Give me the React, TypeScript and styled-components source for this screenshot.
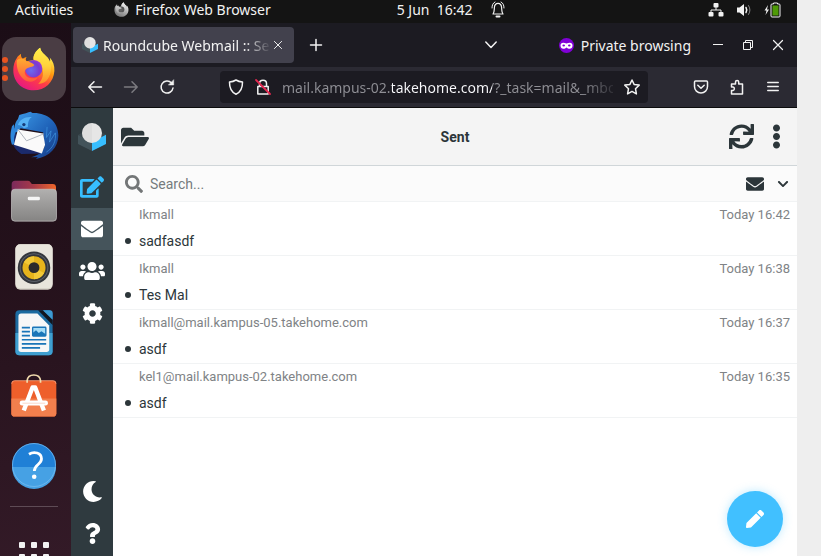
import React from "react";
import styled, { createGlobalStyle } from "styled-components";
import {
  FaChevronDown,
  FaCog,
  FaEdit,
  FaEllipsisV,
  FaEnvelope,
  FaFolderOpen,
  FaMoon,
  FaPen,
  FaQuestion,
  FaSearch,
  FaSync,
  FaUsers,
} from "react-icons/fa";

const uiFont = `"Noto Sans", "Open Sans", sans-serif`;
const mailFont = `Roboto, sans-serif`;

const GlobalStyle = createGlobalStyle`
  *, *::before, *::after { box-sizing: border-box; }
  body { margin: 0; background: #eeeeee; overflow: hidden; }
  button, input { font: inherit; color: inherit; border: 0; padding: 0; margin: 0; background: none; }
  button { cursor: pointer; }
  svg { display: block; flex: none; overflow: visible; }
`;

/* ---------- desktop ---------- */

const Desktop = styled.div`
  display: flex;
  flex-direction: column;
  height: 100vh;
  margin-right: 24px;
  overflow: hidden;
  background: #141414;
  font-family: ${uiFont};
  font-size: 14px;
  color: #f2f2f2;
`;

const TopBar = styled.header`
  display: grid;
  grid-template-columns: 58fr auto 42fr;
  align-items: center;
  flex: none;
  height: 23px;
  padding: 0 16px 4px 15px;
`;

const TopGroup = styled.div<{ $end?: boolean }>`
  display: flex;
  align-items: center;
  gap: ${(p) => (p.$end ? 12 : 41)}px;
  justify-content: ${(p) => (p.$end ? "flex-end" : "flex-start")};
`;

const TopButton = styled.button<{ $gap?: number }>`
  display: flex;
  align-items: center;
  gap: ${(p) => p.$gap ?? 6}px;
  height: 19px;
  line-height: 19px;
  white-space: pre;
`;

const Workspace = styled.div`
  display: flex;
  flex: 1;
  min-height: 0;
`;

const Dock = styled.nav`
  display: flex;
  flex-direction: column;
  gap: 2px;
  flex: none;
  width: 71px;
  padding: 14px 5px 0 2px;
  overflow: hidden;
  background: linear-gradient(170deg, #1b0d16 0%, #24111b 45%, #331a27 100%);
`;

const DockTile = styled.button<{ $active?: boolean }>`
  position: relative;
  display: flex;
  align-items: center;
  justify-content: center;
  flex: none;
  width: 64px;
  height: 64px;
  border-radius: 14px;
  background: ${(p) => (p.$active ? "#4a3d44" : "transparent")};
`;

const RunningDots = styled.span`
  position: absolute;
  left: 0;
  top: 20px;
  display: grid;
  gap: 3px;
  i {
    width: 6px;
    height: 6px;
    border-radius: 3px;
    background: #e95420;
  }
`;

const DockDivider = styled.hr`
  flex: none;
  width: 48px;
  height: 1px;
  margin: 7px auto 16px;
  border: 0;
  background: #5e4b55;
`;

/* ---------- browser ---------- */

const Browser = styled.div`
  display: flex;
  flex-direction: column;
  flex: 1;
  min-width: 0;
`;

const TabStrip = styled.div`
  display: flex;
  align-items: center;
  flex: none;
  height: 44px;
  padding: 0 4px 0 2px;
  background: #1c1b22;
`;

const Tab = styled.div`
  display: flex;
  align-items: center;
  width: 221px;
  height: 36px;
  padding: 0 12px 0 9px;
  border-radius: 4px;
  background: #42414d;
`;

const TabTitle = styled.span`
  flex: 1;
  margin: 0 5px;
  overflow: hidden;
  white-space: nowrap;
  mask-image: linear-gradient(to right, #000 142px, transparent 168px);
`;

const Spacer = styled.div`
  flex: 1;
`;

const ChromeButton = styled.button<{ $w: number; $dim?: boolean }>`
  display: flex;
  align-items: center;
  justify-content: center;
  flex: none;
  width: ${(p) => p.$w}px;
  height: 36px;
  opacity: ${(p) => (p.$dim ? 0.4 : 1)};
`;

const PrivateBadge = styled.div`
  display: flex;
  align-items: center;
  gap: 7px;
  margin: 0 12px 0 53px;
`;

const NavBar = styled.div`
  display: flex;
  align-items: center;
  flex: none;
  height: 41px;
  padding: 0 6px;
  background: #2b2a33;
  border-bottom: 1px solid #0c0c0d;
`;

const UrlBox = styled.div`
  display: flex;
  align-items: center;
  gap: 11px;
  flex: 1;
  height: 32px;
  margin: 0 35px;
  padding: 0 8px;
  border-radius: 4px;
  background: #1c1b22;
`;

const UrlInput = styled.input`
  flex: 1;
  min-width: 0;
  height: 24px;
  outline: none;
  color: transparent;
  background-image: linear-gradient(
    to right,
    #8f8f95 110px,
    #fbfbfe 110px,
    #fbfbfe 210px,
    #8f8f95 210px,
    #8f8f95 300px,
    transparent 338px
  );
  background-clip: text;
  -webkit-background-clip: text;
`;

/* ---------- webmail ---------- */

const Webmail = styled.div`
  position: relative;
  display: flex;
  flex: 1;
  min-height: 0;
  background: #fff;
  color: #2c363a;
  font-family: ${mailFont};
`;

const TaskMenu = styled.nav`
  display: flex;
  flex-direction: column;
  align-items: stretch;
  flex: none;
  width: 42px;
  padding-bottom: 2px;
  background: #2f3a3f;
`;

const Logo = styled.div`
  display: flex;
  align-items: center;
  justify-content: center;
  height: 58px;
`;

const TaskLink = styled.a<{ $selected?: boolean; $accent?: boolean }>`
  display: flex;
  align-items: center;
  justify-content: center;
  height: 42px;
  color: ${(p) => (p.$accent ? "#37beff" : "#fff")};
  background: ${(p) => (p.$selected ? "#45545b" : "transparent")};
`;

const Content = styled.main`
  display: flex;
  flex-direction: column;
  flex: 1;
  min-width: 0;
`;

const Header = styled.header`
  display: grid;
  grid-template-columns: 1fr auto 1fr;
  align-items: center;
  flex: none;
  height: 58px;
  padding: 0 8px;
  background: #f4f4f4;
  border-bottom: 1px solid #d0d6d9;
`;

const Title = styled.h1`
  margin: 0;
  font-size: 14px;
  font-weight: 700;
`;

const HeaderTools = styled.div<{ $end?: boolean }>`
  display: flex;
  align-items: center;
  gap: 10px;
  justify-content: ${(p) => (p.$end ? "flex-end" : "flex-start")};
`;

const SearchBar = styled.form`
  display: flex;
  align-items: center;
  flex: none;
  height: 36px;
  padding: 0 8px 0 12px;
  background: #fbfbfb;
  border-bottom: 1px solid #f1f3f4;
`;

const SearchLabel = styled.label`
  color: #737677;
`;

const SearchInput = styled.input`
  flex: 1;
  min-width: 0;
  margin-left: 7px;
  height: 28px;
  font-size: 14px;
  outline: none;
  &::placeholder {
    color: #757b7e;
    opacity: 1;
  }
`;

const SearchTools = styled.div`
  display: flex;
  align-items: center;
  gap: 13px;
`;

const MessageList = styled.ul`
  margin: 0;
  padding: 0;
  list-style: none;
`;

const Message = styled.li`
  display: grid;
  grid-template-columns: 18px 1fr auto;
  grid-template-rows: 25px 28px;
  align-items: center;
  padding: 0 7px 0 8px;
  border-bottom: 1px solid #f1f3f4;
`;

const Sender = styled.span`
  grid-column: 2;
  font-size: 13px;
  color: #808386;
`;

const Sent = styled.time`
  font-size: 13px;
  color: #808386;
`;

const Bullet = styled.span`
  width: 6px;
  height: 6px;
  margin-left: 4px;
  border-radius: 3px;
  background: #2c363a;
`;

const Subject = styled.a`
  font-size: 14px;
  color: #2c363a;
  text-decoration: none;
`;

const ComposeButton = styled.button`
  position: absolute;
  right: 14px;
  bottom: 9px;
  display: flex;
  align-items: center;
  justify-content: center;
  width: 56px;
  height: 56px;
  border-radius: 50%;
  color: #fff;
  background: #41c0ff;
  box-shadow: 0 0 10px rgba(65, 192, 255, 0.35);
`;

/* ---------- drawings ---------- */

const line = {
  fill: "none",
  stroke: "currentColor",
  strokeWidth: 1.5,
  strokeLinecap: "round",
  strokeLinejoin: "round",
} as const;

const FirefoxIcon = ({ size = 44, mono = false }: { size?: number; mono?: boolean }) => {
  const id = mono ? "m" : "c";
  return (
    <svg width={size} height={size} viewBox="36 48 134 136" aria-hidden="true">
      <defs>
        <linearGradient id={`ff-body-${id}`} x1="0.85" y1="0.05" x2="0.25" y2="1">
          <stop offset="0.1" stopColor={mono ? "#eee" : "#fff44f"} />
          <stop offset="0.4" stopColor={mono ? "#bbb" : "#ff980e"} />
          <stop offset="0.65" stopColor={mono ? "#999" : "#ff3b47"} />
          <stop offset="1" stopColor={mono ? "#777" : "#e31587"} />
        </linearGradient>
        <linearGradient id={`ff-fox-${id}`} x1="0" y1="0" x2="0" y2="1">
          <stop offset="0" stopColor={mono ? "#ccc" : "#ffac2f"} />
          <stop offset="1" stopColor={mono ? "#999" : "#ff5a3c"} />
        </linearGradient>
        <linearGradient id={`ff-flame-${id}`} x1="0" y1="0" x2="0" y2="1">
          <stop offset="0" stopColor={mono ? "#eee" : "#fff04a"} />
          <stop offset="0.5" stopColor={mono ? "#ccc" : "#ffd23c"} />
          <stop offset="1" stopColor={mono ? "#999" : "#ff8a2a"} />
        </linearGradient>
        <radialGradient id={`ff-globe-${id}`} cx="0.35" cy="0.6" r="0.8">
          <stop offset="0" stopColor={mono ? "#666" : "#6a6bf0"} />
          <stop offset="0.6" stopColor={mono ? "#555" : "#7a3bd0"} />
          <stop offset="1" stopColor={mono ? "#444" : "#b037d8"} />
        </radialGradient>
      </defs>
      <path
        fill={`url(#ff-body-${id})`}
        d="M122 50C124 64 136 70 146 82C149 86 151 90 152 94C154 89 153 84 151 80C162 92 167 106 166 122C164 157 137 182 102 182C66 182 39 156 39 120C39 104 43 92 50 82C52 77 58 74 63 69C62 76 64 81 68 84C71 82 75 80 80 79C77 84 77 88 80 92L102 88C99 76 108 60 122 50Z"
      />
      <path
        fill={`url(#ff-flame-${id})`}
        d="M102 88C99 74 108 60 122 50C124 64 136 70 146 82C160 102 158 130 146 146C140 156 130 162 116 162C132 148 134 128 127 114C120 100 112 92 102 88Z"
      />
      <circle cx="102" cy="115" r="27" fill={`url(#ff-globe-${id})`} />
      <path
        fill={`url(#ff-fox-${id})`}
        d="M50 90C54 84 60 82 68 84C72 84 76 88 80 92C90 94 100 98 104 104C100 110 94 110 88 111C82 112 76 116 75 122C72 132 80 142 92 144C100 146 108 144 114 142C108 154 90 160 74 150C56 138 48 114 50 90Z"
      />
    </svg>
  );
};

const ThunderbirdIcon = () => (
  <svg width="49" height="49" viewBox="28 33 148 146" aria-hidden="true">
    <defs>
      <linearGradient id="tb-body" x1="0" y1="0" x2="1" y2="1">
        <stop offset="0" stopColor="#3c9be8" />
        <stop offset="0.55" stopColor="#1f62b8" />
        <stop offset="1" stopColor="#17377f" />
      </linearGradient>
    </defs>
    <path fill="#1b2a6c" d="M36 88C26 112 34 144 62 162L126 160L60 120Z" />
    <path
      fill="url(#tb-body)"
      d="M56 44C70 40 84 36 90 34L96 38C140 36 174 64 174 106C174 142 148 170 106 177L112 171L92 172C120 164 132 150 132 136L128 96L60 84L50 98C38 90 40 70 52 56Z"
    />
    <path fill="#2e86dc" d="M34 78C28 100 28 116 34 134L42 132C38 114 42 98 50 90C44 88 40 84 40 72Z" />
    <path fill="#fafafa" d="M52 88L128 100L134 134L124 160L40 134Z" />
    <path d="M52 88L78 122L130 101" fill="none" stroke="#aeb4bd" strokeWidth="3" />
    <path d="M140 80L138 112L152 92L147 126L165 98C168 122 158 144 138 156" fill="none" stroke="#3f97e0" strokeWidth="2" />
    <path fill="#56b2f4" d="M52 74C56 58 74 48 94 50C84 56 82 68 82 80L70 84C64 76 58 74 52 74Z" />
    <circle cx="70" cy="73" r="5" fill="#173b78" />
  </svg>
);

const FilesIcon = () => (
  <svg width="46" height="42" viewBox="34 241 137 124" aria-hidden="true">
    <defs>
      <linearGradient id="fl-back" x1="0" y1="0" x2="1" y2="0">
        <stop offset="0" stopColor="#7b2a5c" />
        <stop offset="0.5" stopColor="#a83a48" />
        <stop offset="1" stopColor="#f0662a" />
      </linearGradient>
      <linearGradient id="fl-front" x1="0" y1="0" x2="0" y2="1">
        <stop offset="0" stopColor="#b1b0af" />
        <stop offset="1" stopColor="#858483" />
      </linearGradient>
    </defs>
    <path fill="url(#fl-back)" d="M36 254Q36 243 46 243H84Q89 243 92 247L96 252H158Q168 252 168 262V290H36Z" />
    <rect x="35.5" y="268" width="134" height="95" rx="10" fill="url(#fl-front)" stroke="#c9c8c7" strokeWidth="2" />
    <rect x="84" y="290" width="36" height="11" rx="4" fill="#f5f5f5" />
  </svg>
);

const SpeakerIcon = () => (
  <svg width="38" height="46" viewBox="46 12 112 136" aria-hidden="true">
    <rect x="47" y="13" width="110" height="134" rx="14" fill="#d5d1c6" />
    <rect x="47" y="13" width="110" height="130" rx="14" fill="#e8e5dc" />
    <circle cx="102" cy="82" r="48" fill="#33363b" />
    <circle cx="102" cy="82" r="41" fill="none" stroke="#5b6068" strokeWidth="3" />
    <circle cx="102" cy="82" r="34" fill="#e6b41c" />
    <path d="M102 82L72 66A34 34 0 0 1 102 48ZM102 82L132 98A34 34 0 0 1 102 116Z" fill="#f2c937" />
    <circle cx="102" cy="82" r="16" fill="#2b2b2b" />
  </svg>
);

const WriterIcon = () => (
  <svg width="38" height="46" viewBox="46 212 112 136" aria-hidden="true">
    <rect x="47" y="213" width="110" height="133" rx="12" fill="#1c6ba0" />
    <path d="M47 280H157V334Q157 346 145 346H59Q47 346 47 334Z" fill="#3f9fd0" />
    <path d="M56 230Q56 222 64 222H112L147 258V328Q147 336 139 336H64Q56 336 56 328Z" fill="#f7f7f7" />
    <path d="M114 213H130L157 240V256Z" fill="#12151f" />
    <path d="M128 213H149Q157 213 157 221V241Z" fill="#3d9ad2" />
    <path d="M66 264H90M66 276H90M66 288H90M66 300H138M66 312H138M66 324H120" stroke="#1a75b8" strokeWidth="5" />
    <rect x="98" y="263" width="39" height="26" rx="2" fill="#a5dcf6" stroke="#1a75b8" strokeWidth="4" />
    <path d="M98 289V280L108 272L116 280L124 275L137 284V289Z" fill="#1a75b8" />
  </svg>
);

const SoftwareIcon = () => (
  <svg width="46" height="50" viewBox="34 14 137 149" aria-hidden="true">
    <rect x="35" y="33" width="134" height="108" rx="10" fill="#ee5f2b" />
    <path d="M35 87H169V131Q169 141 159 141H45Q35 141 35 131Z" fill="#f27f4d" />
    <path d="M36 43Q36 34 45 34H159Q168 34 168 43" fill="none" stroke="#f9b08d" strokeWidth="2" />
    <path d="M82 40V34Q84 17 102 17Q120 17 122 34V40" fill="none" stroke="#f1dcae" strokeWidth="5" />
    <path d="M72 123L98 54H106L132 123" fill="none" stroke="#fff" strokeWidth="13" strokeLinejoin="round" />
    <rect x="60" y="93" width="84" height="15" rx="7" fill="#fff" />
    <path d="M68 101H136" stroke="#f6c5ae" strokeWidth="2" />
  </svg>
);

const HelpIcon = () => (
  <svg width="46" height="46" viewBox="0 0 46 46" aria-hidden="true">
    <circle cx="23" cy="23" r="22" fill="#2080d6" />
    <path d="M1 25H45A22 22 0 0 1 1 25Z" fill="#46a1e4" />
    <circle cx="23" cy="23" r="21.5" fill="none" stroke="#7cc0f0" strokeWidth="0.7" />
    <path
      d="M18 12.200C23 9 30.500 10.600 30.500 16.800C30.500 22.500 23.300 22.500 23.300 29"
      fill="none"
      stroke="#fff"
      strokeWidth="2.800"
    />
    <circle cx="23.200" cy="34.800" r="2.300" fill="#fff" />
  </svg>
);

const AppGridIcon = () => (
  <svg width="30" height="30" viewBox="0 0 30 30" fill="#f2f2f2" aria-hidden="true">
    {[0, 12, 24].map((y) =>
      [0, 12, 24].map((x) => <rect key={`${x}-${y}`} x={x} y={y} width="6" height="6" rx="1" />)
    )}
  </svg>
);

const CubeIcon = ({ size }: { size: number }) => (
  <svg width={size} height={size} viewBox="0 0 84 84" aria-hidden="true">
    <path d="M0 36L14 28H70L84 35L42 58Z" fill="#3a474d" />
    <path d="M0 36L42 57V84L0 63Z" fill="#43535a" />
    <path d="M84 35L42 57V84L84 63Z" fill="#37beff" />
    <circle cx="42" cy="30" r="30" fill="#e6e6e6" />
    <path d="M42 0A30 30 0 0 0 42 60Z" fill="#d6d6d6" opacity="0.5" />
  </svg>
);

const BellIcon = () => (
  <svg width="14" height="17" viewBox="0 0 14 17" {...line} strokeWidth={1.2} aria-hidden="true">
    <path d="M2 13C3.500 11 3.200 9 3.400 6.500C3.600 3.800 5 2.400 7 2.400S10.400 3.800 10.600 6.500C10.800 9 10.500 11 12 13Z" />
    <path d="M1 7C1 4 2 2 4 1M13 7C13 4 12 2 10 1" strokeWidth="1" />
    <path d="M5.500 15.500H8.500" strokeWidth="2" />
  </svg>
);

const NetworkIcon = () => (
  <svg width="16" height="14" viewBox="0 0 16 14" fill="currentColor" aria-hidden="true">
    <rect x="5.500" y="0" width="5" height="4.500" rx="1" />
    <rect x="0.500" y="9" width="5" height="4.500" rx="1" />
    <rect x="10.500" y="9" width="5" height="4.500" rx="1" />
    <path d="M8 4V7M3 10V7H13V10" fill="none" stroke="currentColor" />
  </svg>
);

const VolumeIcon = () => (
  <svg width="16" height="14" viewBox="0 0 16 14" aria-hidden="true">
    <path d="M1 4.500H3.500L8 1V13L3.500 9.500H1Z" fill="currentColor" />
    <path d="M10 4.500Q11.500 7 10 9.500" {...line} />
    <path d="M12.500 2.500Q15.500 7 12.500 11.500" {...line} strokeWidth={1} opacity="0.5" />
  </svg>
);

const BatteryIcon = () => (
  <svg width="17" height="16" viewBox="0 0 17 16" aria-hidden="true">
    <path d="M4 3L0.500 8.500H2.500L1.500 13L5 7.500H3Z" fill="currentColor" />
    <path d="M9.500 2V1H13.500V2H15Q16 2 16 3V14Q16 15 15 15H8Q7 15 7 14V3Q7 2 8 2Z" fill="none" stroke="currentColor" />
    <rect x="8.500" y="3.500" width="6" height="10" fill="#4e9a06" />
  </svg>
);

const CloseIcon = ({ size }: { size: number }) => (
  <svg width={size} height={size} viewBox="0 0 10 10" {...line} strokeWidth={1.2} aria-hidden="true">
    <path d="M0.500 0.500L9.500 9.500M9.500 0.500L0.500 9.500" />
  </svg>
);

const PlusIcon = () => (
  <svg width="12" height="12" viewBox="0 0 12 12" {...line} aria-hidden="true">
    <path d="M6 0.500V11.500M0.500 6H11.500" />
  </svg>
);

const ChevronIcon = () => (
  <svg width="12" height="8" viewBox="0 0 12 8" {...line} aria-hidden="true">
    <path d="M0.800 1L6 6.500L11.200 1" />
  </svg>
);

const MaskIcon = () => (
  <svg width="15" height="15" viewBox="0 0 15 15" aria-hidden="true">
    <circle cx="7.500" cy="7.500" r="7.500" fill="#8000d7" />
    <path
      d="M1.500 7.500C1.500 4.300 4.500 4.200 7.500 5.600C10.500 4.200 13.500 4.300 13.500 7.500C13.500 11.400 9.500 11.300 7.500 9.400C5.500 11.300 1.500 11.400 1.500 7.500Z"
      fill="#fff"
    />
    <ellipse cx="4.700" cy="7.600" rx="1.300" ry="1" fill="#8000d7" />
    <ellipse cx="10.300" cy="7.600" rx="1.300" ry="1" fill="#8000d7" />
  </svg>
);

const ArrowIcon = ({ forward = false }: { forward?: boolean }) => (
  <svg width="14" height="12" viewBox="0 0 14 12" {...line} aria-hidden="true">
    <path d={forward ? "M0.500 6H13.200M8 0.800L13.200 6L8 11.200" : "M13.500 6H0.800M6 0.800L0.800 6L6 11.200"} />
  </svg>
);

const ReloadIcon = () => (
  <svg width="16" height="16" viewBox="0 0 16 16" {...line} aria-hidden="true">
    <path d="M14 9A6 6 0 1 1 12.500 4" />
    <path d="M14.700 1V6H9.700Z" fill="currentColor" strokeWidth="0.500" />
  </svg>
);

const ShieldIcon = () => (
  <svg width="16" height="16" viewBox="0 0 16 16" {...line} aria-hidden="true">
    <path d="M8 1C10 2.300 12 2.800 14.500 3C14.600 8.500 13 13 8 15.200C3 13 1.400 8.500 1.500 3C4 2.800 6 2.300 8 1Z" />
  </svg>
);

const LockIcon = () => (
  <svg width="16" height="16" viewBox="0 0 16 16" {...line} aria-hidden="true">
    <path d="M2.800 7.500H13.200V15H2.800ZM4.500 7.500V4.500C4.500 0 11.500 0 11.500 4.500V7.500" />
    <path d="M1 1L15 15" stroke="#e22850" strokeWidth="1.800" />
  </svg>
);

const StarIcon = () => (
  <svg width="16" height="16" viewBox="0 0 16 16" {...line} aria-hidden="true">
    <path d="M8 1L10.100 5.400L15.200 6.100L11.500 9.700L12.400 14.900L8 12.400L3.600 14.900L4.500 9.700L0.800 6.100L5.900 5.400Z" />
  </svg>
);

const PocketIcon = () => (
  <svg width="16" height="16" viewBox="0 0 16 16" {...line} aria-hidden="true">
    <path d="M2.500 2H13.500Q14.500 2 14.500 3V7.500A6.500 6.500 0 0 1 1.500 7.500V3Q1.500 2 2.500 2Z" />
    <path d="M4.800 6.200L8 9.300L11.200 6.200" />
  </svg>
);

const ExtensionIcon = () => (
  <svg width="16" height="16" viewBox="0 0 16 16" {...line} aria-hidden="true">
    <path d="M2.500 15V11.500H4A1.800 1.800 0 0 0 4 8H2.500V5H6.500V3A1.600 1.600 0 0 1 9.700 3V5H13.500V15Z" />
  </svg>
);

const MenuIcon = () => (
  <svg width="12" height="12" viewBox="0 0 12 12" {...line} strokeWidth={1.300} aria-hidden="true">
    <path d="M0.700 1.500H11.300M0.700 5.500H11.300M0.700 9.500H11.300" />
  </svg>
);

const MinimizeIcon = () => (
  <svg width="10" height="10" viewBox="0 0 10 10" stroke="currentColor" aria-hidden="true">
    <path d="M0 4.500H10" />
  </svg>
);

const RestoreIcon = () => (
  <svg width="10" height="10" viewBox="0 0 10 10" fill="none" stroke="currentColor" aria-hidden="true">
    <path d="M0.500 2.500H7.500V9.500H0.500ZM2.500 2.500V0.500H9.500V7.500H7.500" />
  </svg>
);

/* ---------- data ---------- */

const dockApps = [
  { name: "Firefox", icon: <FirefoxIcon />, active: true },
  { name: "Thunderbird", icon: <ThunderbirdIcon /> },
  { name: "Files", icon: <FilesIcon /> },
  { name: "Rhythmbox", icon: <SpeakerIcon /> },
  { name: "Writer", icon: <WriterIcon /> },
  { name: "Software", icon: <SoftwareIcon /> },
  { name: "Help", icon: <HelpIcon /> },
];

const messages = [
  { to: "Ikmall", subject: "sadfasdf", date: "Today 16:42" },
  { to: "Ikmall", subject: "Tes Mal", date: "Today 16:38" },
  { to: "ikmall@mail.kampus-05.takehome.com", subject: "asdf", date: "Today 16:37" },
  { to: "kel1@mail.kampus-02.takehome.com", subject: "asdf", date: "Today 16:35" },
];

export default function App() {
  return (
    <Desktop>
      <GlobalStyle />
      <TopBar>
        <TopGroup>
          <TopButton>Activities</TopButton>
          <TopButton>
            <FirefoxIcon size={15} mono />
            Firefox Web Browser
          </TopButton>
        </TopGroup>
        <TopButton $gap={18}>
          {"5 Jun  16:42"}
          <BellIcon />
        </TopButton>
        <TopGroup $end>
          <NetworkIcon />
          <VolumeIcon />
          <BatteryIcon />
        </TopGroup>
      </TopBar>

      <Workspace>
        <Dock aria-label="Dock">
          {dockApps.map((app) => (
            <DockTile key={app.name} $active={app.active} aria-label={app.name}>
              {app.active && (
                <RunningDots>
                  <i />
                  <i />
                  <i />
                </RunningDots>
              )}
              {app.icon}
            </DockTile>
          ))}
          <DockDivider />
          <DockTile aria-label="Show Applications">
            <AppGridIcon />
          </DockTile>
        </Dock>

        <Browser>
          <TabStrip>
            <Tab>
              <CubeIcon size={16} />
              <TabTitle>Roundcube Webmail :: Sent</TabTitle>
              <ChromeButton $w={8} aria-label="Close tab">
                <CloseIcon size={8} />
              </ChromeButton>
            </Tab>
            <ChromeButton $w={44} aria-label="New tab">
              <PlusIcon />
            </ChromeButton>
            <Spacer />
            <ChromeButton $w={30} aria-label="List all tabs">
              <ChevronIcon />
            </ChromeButton>
            <PrivateBadge>
              <MaskIcon />
              Private browsing
            </PrivateBadge>
            <ChromeButton $w={30} aria-label="Minimize">
              <MinimizeIcon />
            </ChromeButton>
            <ChromeButton $w={30} aria-label="Restore">
              <RestoreIcon />
            </ChromeButton>
            <ChromeButton $w={30} aria-label="Close">
              <CloseIcon size={10} />
            </ChromeButton>
          </TabStrip>

          <NavBar>
            <ChromeButton $w={36} aria-label="Back">
              <ArrowIcon />
            </ChromeButton>
            <ChromeButton $w={36} $dim aria-label="Forward">
              <ArrowIcon forward />
            </ChromeButton>
            <ChromeButton $w={36} aria-label="Reload">
              <ReloadIcon />
            </ChromeButton>
            <UrlBox>
              <ShieldIcon />
              <LockIcon />
              <UrlInput
                aria-label="Address"
                defaultValue="mail.kampus-02.takehome.com/?_task=mail&_mbox=Sent"
              />
              <StarIcon />
            </UrlBox>
            <ChromeButton $w={36} aria-label="Save to Pocket">
              <PocketIcon />
            </ChromeButton>
            <ChromeButton $w={36} aria-label="Extensions">
              <ExtensionIcon />
            </ChromeButton>
            <ChromeButton $w={36} aria-label="Menu">
              <MenuIcon />
            </ChromeButton>
          </NavBar>

          <Webmail>
            <TaskMenu aria-label="Tasks">
              <Logo>
                <CubeIcon size={28} />
              </Logo>
              <TaskLink href="#compose" $accent aria-label="Compose">
                <FaEdit size={24} />
              </TaskLink>
              <TaskLink href="#mail" $selected aria-label="Mail">
                <FaEnvelope size={22} />
              </TaskLink>
              <TaskLink href="#contacts" aria-label="Contacts">
                <FaUsers size={26} />
              </TaskLink>
              <TaskLink href="#settings" aria-label="Settings">
                <FaCog size={21} />
              </TaskLink>
              <Spacer />
              <TaskLink href="#dark" aria-label="Dark mode">
                <FaMoon size={21} />
              </TaskLink>
              <TaskLink href="#about" aria-label="About">
                <FaQuestion size={21} />
              </TaskLink>
            </TaskMenu>

            <Content>
              <Header>
                <HeaderTools>
                  <button aria-label="Folders">
                    <FaFolderOpen size={28} />
                  </button>
                </HeaderTools>
                <Title>Sent</Title>
                <HeaderTools $end>
                  <button aria-label="Refresh">
                    <FaSync size={25} />
                  </button>
                  <button aria-label="More">
                    <FaEllipsisV size={25} />
                  </button>
                </HeaderTools>
              </Header>

              <SearchBar>
                <SearchLabel htmlFor="search" aria-label="Search">
                  <FaSearch size={18} />
                </SearchLabel>
                <SearchInput id="search" placeholder="Search..." />
                <SearchTools>
                  <button type="button" aria-label="Unread filter">
                    <FaEnvelope size={18} />
                  </button>
                  <button type="button" aria-label="Search options">
                    <FaChevronDown size={12} />
                  </button>
                </SearchTools>
              </SearchBar>

              <MessageList>
                {messages.map((m) => (
                  <Message key={m.date}>
                    <Sender>{m.to}</Sender>
                    <Sent>{m.date}</Sent>
                    <Bullet />
                    <Subject href="#message">{m.subject}</Subject>
                  </Message>
                ))}
              </MessageList>
            </Content>

            <ComposeButton aria-label="Compose">
              <FaPen size={18} />
            </ComposeButton>
          </Webmail>
        </Browser>
      </Workspace>
    </Desktop>
  );
}
